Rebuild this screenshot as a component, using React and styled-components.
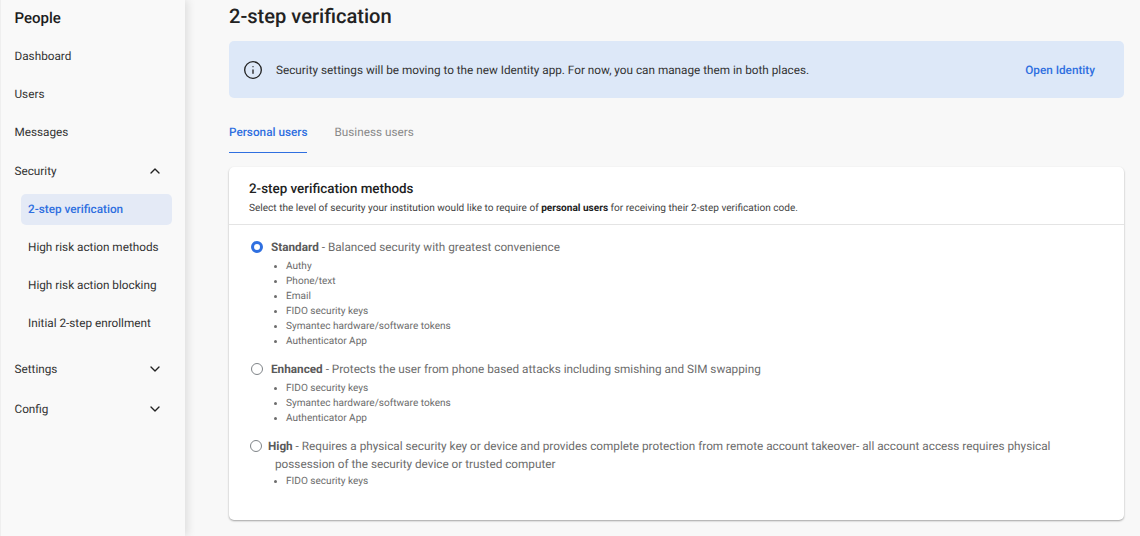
import styled, { createGlobalStyle } from "styled-components";
import { ChevronDown, ChevronUp, Info } from "lucide-react";

const GlobalStyle = createGlobalStyle`
  html, body {
    margin: 0;
    height: 100%;
    overflow: hidden;
    background: #f8f8f8;
    font-family: Roboto, "Liberation Sans", sans-serif;
    text-rendering: geometricPrecision;
  }
  * { box-sizing: border-box; }
`;

const methods = [
  {
    id: "standard",
    name: "Standard",
    text: "Balanced security with greatest convenience",
    selected: true,
    items: [
      "Authy",
      "Phone/text",
      "Email",
      "FIDO security keys",
      "Symantec hardware/software tokens",
      "Authenticator App",
    ],
  },
  {
    id: "enhanced",
    name: "Enhanced",
    text: "Protects the user from phone based attacks including smishing and SIM swapping",
    items: ["FIDO security keys", "Symantec hardware/software tokens", "Authenticator App"],
  },
];

const App = () => {
  return (
    <>
      <GlobalStyle />
      <Page>
        <Sidebar>
          <SideTitle>People</SideTitle>
          <SideLink>Dashboard</SideLink>
          <SideLink>Users</SideLink>
          <SideLink>Messages</SideLink>
          <SideGroup>
            Security
            <ChevronUp size={16} strokeWidth={2} color="#222" />
          </SideGroup>
          <SubLink $active>2-step verification</SubLink>
          <SubLink>High risk action methods</SubLink>
          <SubLink>High risk action blocking</SubLink>
          <SubLink>Initial 2-step enrollment</SubLink>
          <SideGroup $first>
            Settings
            <ChevronDown size={16} strokeWidth={2} color="#222" />
          </SideGroup>
          <SideGroup>
            Config
            <ChevronDown size={16} strokeWidth={2} color="#222" />
          </SideGroup>
        </Sidebar>
        <Main>
          <Title>2-step verification</Title>
          <Banner>
            <Info size={20} strokeWidth={1.6} color="#222" />
            <BannerText>
              Security settings will be moving to the new Identity app. For now, you can manage them in both places.
            </BannerText>
            <BannerLink>Open Identity</BannerLink>
          </Banner>
          <Tabs>
            <Tab $active>Personal users</Tab>
            <Tab>Business users</Tab>
          </Tabs>
          <Card>
            <CardHeader>
              <CardTitle>2-step verification methods</CardTitle>
              <CardSub>
                Select the level of security your institution would like to require of{" "}
                <b>personal users</b> for receiving their 2-step verification code.
              </CardSub>
            </CardHeader>
            <CardBody>
              {methods.map((m) => (
                <Method key={m.id}>
                  <MethodLabel>
                    <Radio $selected={m.selected} />
                    <span>
                      <b>{m.name}</b> - {m.text}
                    </span>
                  </MethodLabel>
                  <Options>
                    {m.items.map((item) => (
                      <li key={item}>{item}</li>
                    ))}
                  </Options>
                </Method>
              ))}
              <Method>
                <HighLabel>
                  <HighRadio />
                  <HighText>
                    <span>
                      <b>High</b> - Requires a physical security key or device and provides complete
                      protection from remote account takeover- all account access requires physical
                    </span>
                    <HighWrap>possession of the security device or trusted computer</HighWrap>
                  </HighText>
                </HighLabel>
                <Options $tight>
                  <li>FIDO security keys</li>
                </Options>
              </Method>
            </CardBody>
          </Card>
        </Main>
      </Page>
    </>
  );
};

const Page = styled.div`
  display: flex;
  width: 1140px;
  height: 536px;
  overflow: hidden;
`;

const Sidebar = styled.nav`
  display: flex;
  flex-direction: column;
  width: 185px;
  flex-shrink: 0;
  height: 100%;
  padding: 0 15px 0 13.5px;
  background: #f9f9f9;
  border-left: 1px solid #efefef;
  box-shadow: 3px 0 8px rgba(0, 0, 0, 0.1);
  position: relative;
`;

const SideTitle = styled.div`
  height: 37px;
  line-height: 37px;
  font-size: 15px;
  font-weight: 500;
  color: #1c1c1c;
`;

const SideLink = styled.div`
  height: 38px;
  line-height: 38px;
  font-size: 11.75px;
  color: #333;
`;

const SideGroup = styled.div`
  display: flex;
  align-items: center;
  justify-content: space-between;
  flex-shrink: 0;
  height: 40px;
  margin-top: ${(p) => (p.$first ? "6px" : "0")};
  padding-right: 7px;
  font-size: 11.75px;
  color: #333;
`;

const SubLink = styled.div`
  flex-shrink: 0;
  height: 31px;
  line-height: 31px;
  margin: 3px -2px 4px 6.5px;
  padding-left: 7px;
  border-radius: 5px;
  font-size: 11.75px;
  font-weight: ${(p) => (p.$active ? 500 : 400)};
  color: ${(p) => (p.$active ? "#2f6fe0" : "#333")};
  background: ${(p) => (p.$active ? "#e4eaf6" : "transparent")};
`;

const Main = styled.main`
  flex: 1;
  min-width: 0;
  padding: 0 16px 0 44px;
`;

const Title = styled.h1`
  margin: 0;
  height: 41px;
  padding-top: 4px;
  line-height: 24px;
  font-size: 20.1px;
  font-weight: 500;
  color: #222;
`;

const Banner = styled.div`
  display: flex;
  align-items: center;
  height: 57px;
  padding: 0 29px 0 14px;
  border-radius: 5px;
  background: #dde8f8;
`;

const BannerText = styled.div`
  flex: 1;
  margin-left: 13px;
  font-size: 11.75px;
  color: #333;
`;

const BannerLink = styled.div`
  font-size: 11.75px;
  font-weight: 500;
  color: #2f6fe0;
`;

const Tabs = styled.div`
  display: flex;
  gap: 27px;
  height: 55px;
`;

const Tab = styled.div`
  display: flex;
  align-items: center;
  padding-top: 13px;
  height: 55px;
  font-size: 11.75px;
  font-weight: ${(p) => (p.$active ? 500 : 400)};
  color: ${(p) => (p.$active ? "#2f6fe0" : "#888")};
  border-bottom: 1px solid ${(p) => (p.$active ? "#2f6fe0" : "transparent")};
`;

const Card = styled.section`
  height: 353px;
  margin-top: 14px;
  border-radius: 5px;
  background: #fff;
  box-shadow: 0 1px 2px rgba(0, 0, 0, 0.35);
`;

const CardHeader = styled.header`
  height: 58px;
  padding: 13.5px 20px 0;
  border-bottom: 1px solid #e4e4e4;
`;

const CardTitle = styled.h2`
  margin: 0;
  line-height: 17px;
  font-size: 13.4px;
  font-weight: 500;
  color: #222;
`;

const CardSub = styled.p`
  margin: 4.5px 0 0;
  line-height: 14px;
  font-size: 10.07px;
  color: #444;

  b {
    font-weight: 700;
    color: #222;
  }
`;

const CardBody = styled.div`
  padding: 13.5px 22px 0;
`;

const Method = styled.div`
  margin-bottom: 11px;
`;

const MethodLabel = styled.div`
  display: flex;
  align-items: center;
  gap: 8px;
  height: 17px;
  font-size: 11.75px;
  color: #6c6c6c;

  b {
    font-weight: 700;
    color: #5a5a5a;
  }
`;

const HighLabel = styled.div`
  display: flex;
  align-items: flex-start;
  font-size: 11.75px;
  line-height: 18px;
  color: #6c6c6c;

  b {
    font-weight: 700;
    color: #5a5a5a;
  }
`;

const HighText = styled.div`
  margin-left: 6px;
`;

const HighWrap = styled.div`
  padding-left: 7px;
`;

const Radio = styled.span`
  flex-shrink: 0;
  width: 12px;
  height: 12px;
  border-radius: 50%;
  background: ${(p) => (p.$selected ? "#fff" : "transparent")};
  border: ${(p) => (p.$selected ? "3.5px solid #2f6fe0" : "1px solid #7f8488")};
`;

const HighRadio = styled(Radio)`
  margin: 3px 0 0 -1px;
`;

const Options = styled.ul`
  margin: ${(p) => (p.$tight ? "1px" : "3.5px")} 0 0;
  padding: 0 0 0 35px;
  font-size: 10.07px;
  line-height: 15px;
  color: #6c6c6c;
`;

export default App;
